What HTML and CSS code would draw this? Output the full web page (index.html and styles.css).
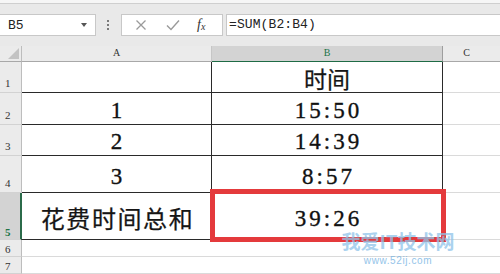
FILE: index.html
```html
<!DOCTYPE html>
<html lang="zh">
<head>
<meta charset="utf-8">
<title>Sheet</title>
<link rel="stylesheet" href="styles.css">
</head>
<body>
<div class="app">
  <div class="topstrip"></div>
  <div class="fbar">
    <div class="namebox"><span class="ref">B5</span><span class="caret"></span></div>
    <div class="grip"><i></i><i></i><i></i></div>
    <div class="fxbox">
      <svg class="ico" width="12" height="12" viewBox="0 0 12 12"><path d="M1.5 1.5 L10.5 10.5 M10.5 1.5 L1.5 10.5" stroke="#9a9a9a" stroke-width="1.3" fill="none"/></svg>
      <svg class="ico" width="14" height="12" viewBox="0 0 14 12"><path d="M1 6.5 L5 10.5 L13 1.5" stroke="#9a9a9a" stroke-width="1.4" fill="none"/></svg>
      <span class="fx">f<sub>x</sub></span>
    </div>
    <div class="formula">=SUM(B2:B4)</div>
  </div>
  <div class="sheet">
    <div class="corner"><span class="tri"></span></div>
    <div class="ch">A</div>
    <div class="ch ch-sel">B</div>
    <div class="ch ch-c">C</div>

    <div class="rh">1</div>
    <div class="cell t r1"></div>
    <div class="cell t r1 cjk">时间</div>
    <div class="cell g"></div>

    <div class="rh">2</div>
    <div class="cell t num">1</div>
    <div class="cell t num">15:50</div>
    <div class="cell g"></div>

    <div class="rh">3</div>
    <div class="cell t num">2</div>
    <div class="cell t num">14:39</div>
    <div class="cell g"></div>

    <div class="rh">4</div>
    <div class="cell t num r4">3</div>
    <div class="cell t num r4">8:57</div>
    <div class="cell g"></div>

    <div class="rh rh-sel">5</div>
    <div class="cell t cjk r5 a5">花费时间总和</div>
    <div class="cell t num r5 b5">39:26<span class="mark"></span></div>
    <div class="cell g"></div>

    <div class="rh small">6</div>
    <div class="cell g"></div>
    <div class="cell g"></div>
    <div class="cell g"></div>

    <div class="rh small">7</div>
    <div class="cell g"></div>
    <div class="cell g"></div>
    <div class="cell g"></div>
  </div>
  <div class="watermark">
    <div class="wm-title">我爱IT技术网</div>
    <div class="wm-url">www.52ij.com</div>
  </div>
</div>
</body>
</html>
```
FILE: styles.css
```css
* { box-sizing: border-box; }
html, body { margin: 0; padding: 0; }
body {
  width: 500px;
  height: 274px;
  overflow: hidden;
  background: #ffffff;
  font-family: "Liberation Serif", serif;
}
.app { position: relative; width: 500px; height: 274px; overflow: hidden; background: #e9e9e9; }

.topstrip {
  height: 4px;
  background: #f6f6f6;
  border-bottom: 1px solid #cfcfcf;
}

.fbar {
  height: 42px;
  display: flex;
  align-items: center;
  background: #e9e9e9;
}
.namebox {
  width: 97px;
  height: 22px;
  margin-left: -1px;
  background: #fff;
  border: 1px solid #c8c8c8;
  display: flex;
  align-items: center;
  justify-content: space-between;
  padding: 0 8px 0 8px;
}
.ref {
  font: 13px/1 "Liberation Mono", monospace;
  color: #222;
}
.caret {
  width: 0; height: 0;
  border-left: 3.5px solid transparent;
  border-right: 3.5px solid transparent;
  border-top: 4px solid #555;
}
.grip {
  width: 26px;
  display: flex;
  flex-direction: column;
  align-items: center;
  gap: 2px;
  margin-left: -1px;
}
.grip i {
  display: block;
  width: 2px; height: 2px;
  background: #7a7a7a;
}
.fxbox {
  width: 102px;
  height: 22px;
  background: #fff;
  border: 1px solid #c8c8c8;
  display: flex;
  align-items: center;
  padding-left: 13px;
}
.fxbox .ico:nth-child(1) { margin-right: 19px; }
.fxbox .ico:nth-child(2) { margin-right: 17px; }
.fx {
  font: italic 14px/1 "Liberation Serif", serif;
  color: #333;
}
.fx sub { font-size: 10px; vertical-align: -1px; }
.formula {
  flex: 1;
  height: 22px;
  margin-left: 3px;
  margin-right: -2px;
  background: #fff;
  border: 1px solid #c8c8c8;
  font: 13px/20px "Liberation Mono", monospace;
  letter-spacing: 0.1px;
  color: #222;
  padding-left: 2px;
}

.sheet {
  display: grid;
  grid-template-columns: 22px 190px 231px 1fr;
  grid-template-rows: 16px 31px 32px 31px 37px 47px 17px 17px;
  background: #fff;
}
.corner {
  background: #ebebeb;
  border-right: 1px solid #bdbdbd;
  border-bottom: 1px solid #a8a8a8;
  position: relative;
}
.tri {
  position: absolute;
  right: 2px; bottom: 2px;
  width: 0; height: 0;
  border-left: 11px solid transparent;
  border-bottom: 11px solid #c3c3c3;
}
.ch {
  background: #ebebeb;
  border-right: 1px solid #c6c6c6;
  border-bottom: 1px solid #a8a8a8;
  display: flex;
  align-items: flex-end;
  justify-content: center;
  font: 10px/12px "Liberation Serif", serif;
  color: #333;
  padding-bottom: 2px;
}
.ch-sel {
  background: #d3d3d3;
  color: #217346;
  border-right: 1px solid #9e9e9e;
  border-bottom: 1px solid #1f6b45;
}
.ch-c { border-right: none; padding-right: 10px; }

.rh {
  background: #ebebeb;
  border-right: 1px solid #bdbdbd;
  border-bottom: 1px solid #d2d2d2;
  display: flex;
  align-items: flex-end;
  padding: 0 0 3px 5px;
  font: 11px/12px "Liberation Serif", serif;
  color: #333;
}
.rh.small { padding-bottom: 1px; }
.rh-sel {
  background: #d3d3d3;
  color: #217346;
  border-right: 2px solid #2b6b4a;
  padding-bottom: 1px;
  font-weight: bold;
}

.cell {
  border-right: 1px solid #dadada;
  border-bottom: 1px solid #dadada;
  display: flex;
  align-items: flex-end;
  justify-content: center;
  color: #111;
}
.cell.t {
  border-right: 1px solid #2a2a2a;
  border-bottom: 1px solid #2a2a2a;
}
.cell.g { border-right: none; }
.num {
  font: 23px/26px "Liberation Serif", serif;
  letter-spacing: 3px;
  padding-left: 3px;
  -webkit-text-stroke: 0.35px #111;
}
.cjk {
  font: 23px/26px "Noto Sans CJK SC", "Noto Sans", sans-serif;
  padding-bottom: 1px;
  color: #151515;
  -webkit-text-stroke: 0.25px #151515;
}
.r4 { padding-bottom: 2px; }
.r5 { padding-bottom: 7px; }
.cjk.r5 {
  font-size: 24px;
  letter-spacing: 1.6px;
  padding-left: 2px;
  padding-bottom: 8px;
}
.a5 { border-left: 1px solid #2b6b4a; margin-left: -1px; }
.b5 { position: relative; }
.mark {
  position: absolute;
  left: -2px; top: -4px;
  right: -4px; bottom: -3px;
  border: 5px solid #e43a3c;
  pointer-events: none;
}

.watermark {
  position: absolute;
  left: 328px;
  top: 227px;
  width: 140px;
  text-align: center;
  opacity: 0.75;
  pointer-events: none;
}
.wm-title {
  font: bold 19px/28px "Noto Sans CJK SC", sans-serif;
  color: #8fc4ea;
}
.wm-url {
  font: 10px/12px "Liberation Sans", sans-serif;
  color: #6fb0e2;
  margin-top: 0;
  letter-spacing: 0.6px;
}
```
